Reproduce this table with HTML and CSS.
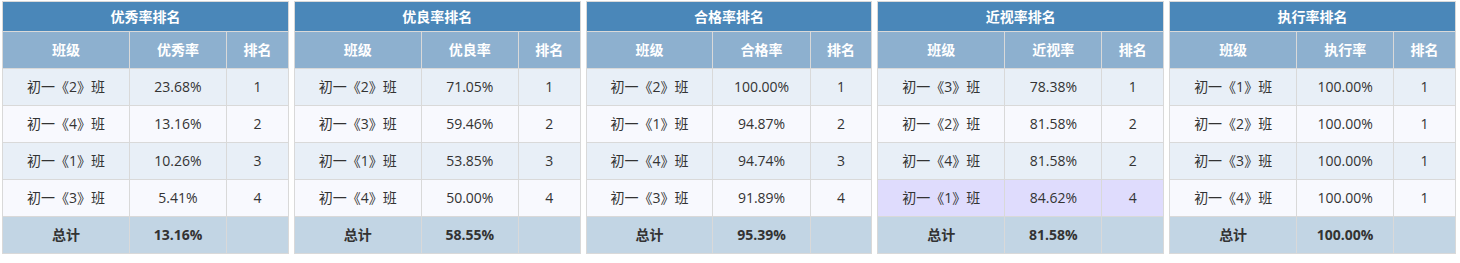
FILE: index.html
```html
<!DOCTYPE html>
<html lang="zh-CN">
<head>
<meta charset="utf-8">
<title>排名</title>
<link rel="stylesheet" href="styles.css">
</head>
<body>
<div class="boards">
  <table class="rank">
    <colgroup><col class="c-class"><col class="c-rate"><col class="c-rank"></colgroup>
    <thead>
      <tr><th class="title" colspan="3">优秀率排名</th></tr>
      <tr class="head"><th>班级</th><th>优秀率</th><th>排名</th></tr>
    </thead>
    <tbody>
      <tr><td>初一《2》班</td><td>23.68%</td><td>1</td></tr>
      <tr><td>初一《4》班</td><td>13.16%</td><td>2</td></tr>
      <tr><td>初一《1》班</td><td>10.26%</td><td>3</td></tr>
      <tr><td>初一《3》班</td><td>5.41%</td><td>4</td></tr>
    </tbody>
    <tfoot><tr><td>总计</td><td>13.16%</td><td></td></tr></tfoot>
  </table>
  <table class="rank">
    <colgroup><col class="c-class"><col class="c-rate"><col class="c-rank"></colgroup>
    <thead>
      <tr><th class="title" colspan="3">优良率排名</th></tr>
      <tr class="head"><th>班级</th><th>优良率</th><th>排名</th></tr>
    </thead>
    <tbody>
      <tr><td>初一《2》班</td><td>71.05%</td><td>1</td></tr>
      <tr><td>初一《3》班</td><td>59.46%</td><td>2</td></tr>
      <tr><td>初一《1》班</td><td>53.85%</td><td>3</td></tr>
      <tr><td>初一《4》班</td><td>50.00%</td><td>4</td></tr>
    </tbody>
    <tfoot><tr><td>总计</td><td>58.55%</td><td></td></tr></tfoot>
  </table>
  <table class="rank">
    <colgroup><col class="c-class"><col class="c-rate"><col class="c-rank"></colgroup>
    <thead>
      <tr><th class="title" colspan="3">合格率排名</th></tr>
      <tr class="head"><th>班级</th><th>合格率</th><th>排名</th></tr>
    </thead>
    <tbody>
      <tr><td>初一《2》班</td><td>100.00%</td><td>1</td></tr>
      <tr><td>初一《1》班</td><td>94.87%</td><td>2</td></tr>
      <tr><td>初一《4》班</td><td>94.74%</td><td>3</td></tr>
      <tr><td>初一《3》班</td><td>91.89%</td><td>4</td></tr>
    </tbody>
    <tfoot><tr><td>总计</td><td>95.39%</td><td></td></tr></tfoot>
  </table>
  <table class="rank">
    <colgroup><col class="c-class"><col class="c-rate"><col class="c-rank"></colgroup>
    <thead>
      <tr><th class="title" colspan="3">近视率排名</th></tr>
      <tr class="head"><th>班级</th><th>近视率</th><th>排名</th></tr>
    </thead>
    <tbody>
      <tr><td>初一《3》班</td><td>78.38%</td><td>1</td></tr>
      <tr><td>初一《2》班</td><td>81.58%</td><td>2</td></tr>
      <tr><td>初一《4》班</td><td>81.58%</td><td>2</td></tr>
      <tr class="alert"><td>初一《1》班</td><td>84.62%</td><td>4</td></tr>
    </tbody>
    <tfoot><tr><td>总计</td><td>81.58%</td><td></td></tr></tfoot>
  </table>
  <table class="rank">
    <colgroup><col class="c-class"><col class="c-rate"><col class="c-rank"></colgroup>
    <thead>
      <tr><th class="title" colspan="3">执行率排名</th></tr>
      <tr class="head"><th>班级</th><th>执行率</th><th>排名</th></tr>
    </thead>
    <tbody>
      <tr><td>初一《1》班</td><td>100.00%</td><td>1</td></tr>
      <tr><td>初一《2》班</td><td>100.00%</td><td>1</td></tr>
      <tr><td>初一《3》班</td><td>100.00%</td><td>1</td></tr>
      <tr><td>初一《4》班</td><td>100.00%</td><td>1</td></tr>
    </tbody>
    <tfoot><tr><td>总计</td><td>100.00%</td><td></td></tr></tfoot>
  </table>
</div>
</body>
</html>
```
FILE: styles.css
```css
html, body {
  margin: 0;
  padding: 0;
  background: #ffffff;
}
body {
  font-family: "Open Sans", "Noto Sans CJK SC", sans-serif;
  font-size: 14px;
  color: #333333;
}
.boards {
  display: flex;
  gap: 5px;
  width: 1454px;
  padding: 1px 0 0 2px;
}
.rank {
  flex: 1 1 0;
  min-width: 0;
  table-layout: fixed;
  border-collapse: collapse;
  border: 1px solid #d9d9d9;
}
.rank .c-class { width: 44.4%; }
.rank .c-rate { width: 34%; }
.rank .c-rank { width: 21.6%; }
.rank th,
.rank td {
  border: 1px solid #d9d9d9;
  padding: 0 2px;
  text-align: center;
  white-space: nowrap;
  line-height: 20px;
}
.rank .title {
  background: #4a87b9;
  color: #ffffff;
  font-weight: bold;
  height: 29px;
}
.rank .head th {
  background: #8db0cf;
  color: #ffffff;
  font-weight: bold;
  height: 36px;
}
.rank tbody td {
  height: 36px;
}
.rank tbody tr:nth-child(odd) td {
  background: #e8eff7;
}
.rank tbody tr:nth-child(even) td {
  background: #f8f9fe;
}
.rank tbody tr.alert td {
  background: #dfdcfd;
}
.rank tfoot td {
  background: #c2d5e4;
  font-weight: bold;
  height: 36px;
}
```
